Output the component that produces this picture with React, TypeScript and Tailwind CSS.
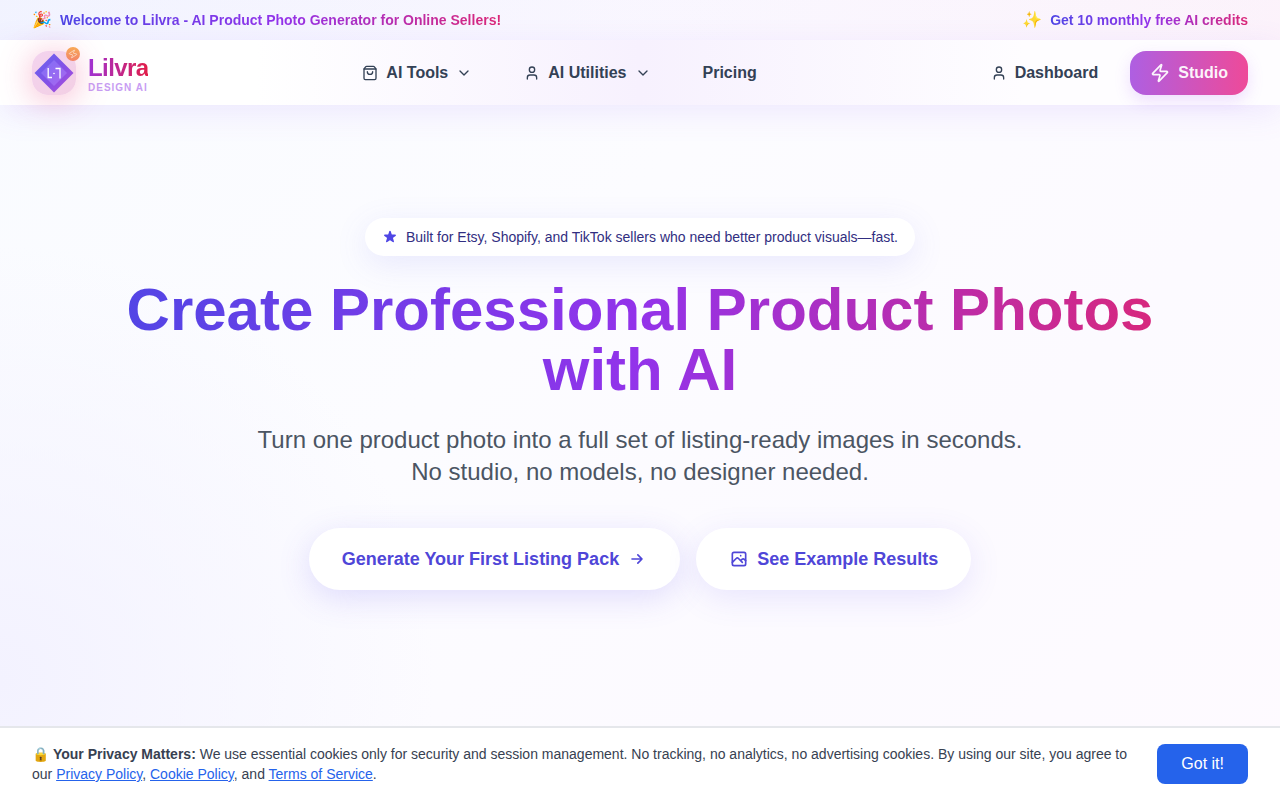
import { ChevronDown, ShoppingBag, User, Zap } from "lucide-react";

const navItems = [
  { label: "AI Tools", Icon: ShoppingBag },
  { label: "AI Utilities", Icon: User },
];

const ArrowIcon = () => (
  <svg width="20" height="20" viewBox="0 0 24 24" fill="none" stroke="currentColor" strokeWidth="2" strokeLinecap="round" strokeLinejoin="round" aria-hidden="true">
    <path d="M13 7l5 5m0 0l-5 5m5-5H6" />
  </svg>
);

const ImageIcon = () => (
  <svg width="20" height="20" viewBox="0 0 24 24" fill="none" stroke="currentColor" strokeWidth="2" strokeLinecap="round" strokeLinejoin="round" aria-hidden="true">
    <rect x="4" y="4" width="16" height="16" rx="2" />
    <path d="M4 16l4.6-4.6a2 2 0 0 1 2.8 0L16 16m-2-2l1.6-1.6a2 2 0 0 1 2.8 0L20 14M14 8h.01" />
  </svg>
);

const Logo = () => (
  <div className="relative size-11 rounded-2xl bg-linear-to-br from-[#f3d3ee] to-[#f3cfe4] shadow-[0_4px_32px_rgba(236,72,133,0.38)]">
    <svg viewBox="0 0 44 44" className="size-11" aria-hidden="true">
      <defs>
        <linearGradient id="outer" x1="0" y1="0" x2="1" y2="1">
          <stop offset="0" stopColor="#6366f1" />
          <stop offset="0.55" stopColor="#8450e6" />
          <stop offset="1" stopColor="#b04ed8" />
        </linearGradient>
        <linearGradient id="inner" x1="0" y1="0" x2="1" y2="1">
          <stop offset="0" stopColor="#8070f6" />
          <stop offset="1" stopColor="#a966ee" />
        </linearGradient>
      </defs>
      <path d="M22 2.500L41.500 22L22 41.500L2.500 22Z" fill="url(#outer)" />
      <path d="M22 9L35 22L22 35L9 22Z" fill="url(#inner)" />
      <path d="M16.200 17v9.500H20M23.500 17.500h4.500v10" fill="none" stroke="white" strokeWidth="1.300" />
      <circle cx="22" cy="22.500" r="0.800" fill="white" />
    </svg>
    <span className="absolute -top-1 -right-1 flex size-[14px] items-center justify-center rounded-full bg-linear-to-b from-[#f8a855] to-[#f28467] text-white/60">
      <Zap size={10} strokeWidth={2} className="rotate-12" />
    </span>
  </div>
);

const TopBar = () => (
  <div className="flex h-10 items-center justify-between bg-linear-to-r from-indigo-500/5 via-purple-500/3 to-pink-500/4 px-8 text-sm font-semibold">
    <div className="flex items-center gap-2">
      <span className="text-base">🎉</span>
      <span className="bg-linear-to-r/srgb from-[#4f46e5] via-[#9333ea] to-[#db2777] bg-clip-text text-transparent">
        Welcome to Lilvra - AI Product Photo Generator for Online Sellers!
      </span>
    </div>
    <div className="flex items-center gap-2">
      <span className="text-base">✨</span>
      <span className="bg-linear-to-r/srgb from-[#4f46e5] via-[#9333ea] to-[#db2777] bg-clip-text text-transparent">
        Get 10 monthly free AI credits
      </span>
    </div>
  </div>
);

const Navbar = () => (
  <nav className="relative flex h-[65px] items-center justify-between bg-linear-to-r from-white from-20% via-[#f7f1fe] to-[#fefdff] to-80% px-8 text-[#334155] shadow-[0_8px_32px_rgba(139,92,246,0.12)]">
    <a href="#home" className="flex items-center gap-3">
      <Logo />
      <span className="flex flex-col pt-0.5">
        <span className="bg-linear-to-r/srgb from-[#9d32d8] to-[#e11d48] bg-clip-text text-2xl leading-7 font-bold tracking-tight text-transparent">
          Lilvra
        </span>
        <span className="text-[10px] leading-3 font-semibold tracking-widest text-[#c79df3]">DESIGN AI</span>
      </span>
    </a>

    <div className="flex items-center gap-[52px] pr-5 font-semibold">
      {navItems.map(({ label, Icon }) => (
        <button key={label} className="flex items-center gap-2">
          <Icon size={16} />
          {label}
          <ChevronDown size={16} />
        </button>
      ))}
      <a href="#pricing">Pricing</a>
    </div>

    <div className="flex items-center gap-8 font-semibold">
      <a href="#dashboard" className="flex items-center gap-2">
        <User size={16} />
        Dashboard
      </a>
      <a
        href="#studio"
        className="flex h-11 items-center gap-2 rounded-2xl bg-linear-to-r/srgb from-[#ae5fe2] to-[#ee4a99] px-5 text-white/95 shadow-[0_6px_16px_rgba(168,85,247,0.18)]"
      >
        <Zap size={20} />
        Studio
      </a>
    </div>
  </nav>
);

const Hero = () => (
  <main className="flex flex-1 flex-col items-center px-8 pt-[113px] pb-[136px] text-center">
    <div className="flex items-center gap-2 rounded-full bg-white px-[17px] py-[9px] text-sm text-[#312e81] shadow-[0_8px_32px_rgba(99,102,241,0.13)]">
      <svg width="16" height="16" viewBox="0 0 20 20" className="fill-[#4f46e5]" aria-hidden="true">
        <path d="M9.05 2.930c.3-.92 1.600-.92 1.900 0l1.070 3.290a1 1 0 0 0 .95.690h3.460c.97 0 1.370 1.240.59 1.810l-2.800 2.030a1 1 0 0 0-.36 1.120l1.070 3.290c.3.920-.76 1.690-1.540 1.120l-2.800-2.030a1 1 0 0 0-1.180 0l-2.800 2.030c-.78.570-1.830-.2-1.540-1.120l1.070-3.290a1 1 0 0 0-.36-1.120L2.980 8.720c-.78-.57-.38-1.810.59-1.810h3.460a1 1 0 0 0 .95-.69z" />
      </svg>
      Built for Etsy, Shopify, and TikTok sellers who need better product visuals—fast.
    </div>

    <h1 className="mt-6 max-w-[1088px] bg-linear-to-r/srgb from-[#4f46e5] via-[#9333ea] to-[#db2777] bg-clip-text text-6xl leading-none font-bold text-transparent">
      Create Professional Product Photos with AI
    </h1>

    <p className="mt-6 max-w-3xl text-2xl text-[#4b5563]">
      Turn one product photo into a full set of listing-ready images in seconds. No studio, no models, no designer
      needed.
    </p>

    <div className="mt-10 flex flex-wrap justify-center gap-4 text-lg font-semibold text-[#4f46d8]">
      <a
        href="#generate"
        className="flex items-center gap-2 rounded-full bg-white px-[33px] py-[17px] shadow-[0_8px_32px_rgba(99,82,241,0.18)]"
      >
        Generate Your First Listing Pack
        <ArrowIcon />
      </a>
      <a
        href="#examples"
        className="flex items-center gap-2 rounded-full bg-white px-[33px] py-[17px] shadow-[0_8px_32px_rgba(99,82,241,0.13)]"
      >
        <ImageIcon />
        See Example Results
      </a>
    </div>
  </main>
);

const CookieBanner = () => (
  <div className="flex items-center justify-between gap-6 border-t-2 border-gray-200 bg-white px-8 py-4">
    <p className="text-sm text-[#374151]">
      🔒 <strong>Your Privacy Matters:</strong> We use essential cookies only for security and session management. No
      tracking, no analytics, no advertising cookies. By using our site, you agree to our{" "}
      <a href="#privacy" className="text-[#2563eb] underline">Privacy Policy</a>,{" "}
      <a href="#cookies" className="text-[#2563eb] underline">Cookie Policy</a>, and{" "}
      <a href="#terms" className="text-[#2563eb] underline">Terms of Service</a>.
    </p>
    <button className="shrink-0 rounded-lg bg-[#2563eb] px-6 py-2 text-white">Got it!</button>
  </div>
);

export default function App() {
  return (
    <div className="flex min-h-screen flex-col bg-[radial-gradient(circle_at_0%_85%,#f3f2ff_0%,transparent_30%),linear-gradient(135deg,#f9fbff_0%,#fcfcff_40%,#fcfaff_70%,#fefaff_100%)] font-['Liberation_Sans',Arial,sans-serif]">
      <TopBar />
      <Navbar />
      <Hero />
      <CookieBanner />
    </div>
  );
}
